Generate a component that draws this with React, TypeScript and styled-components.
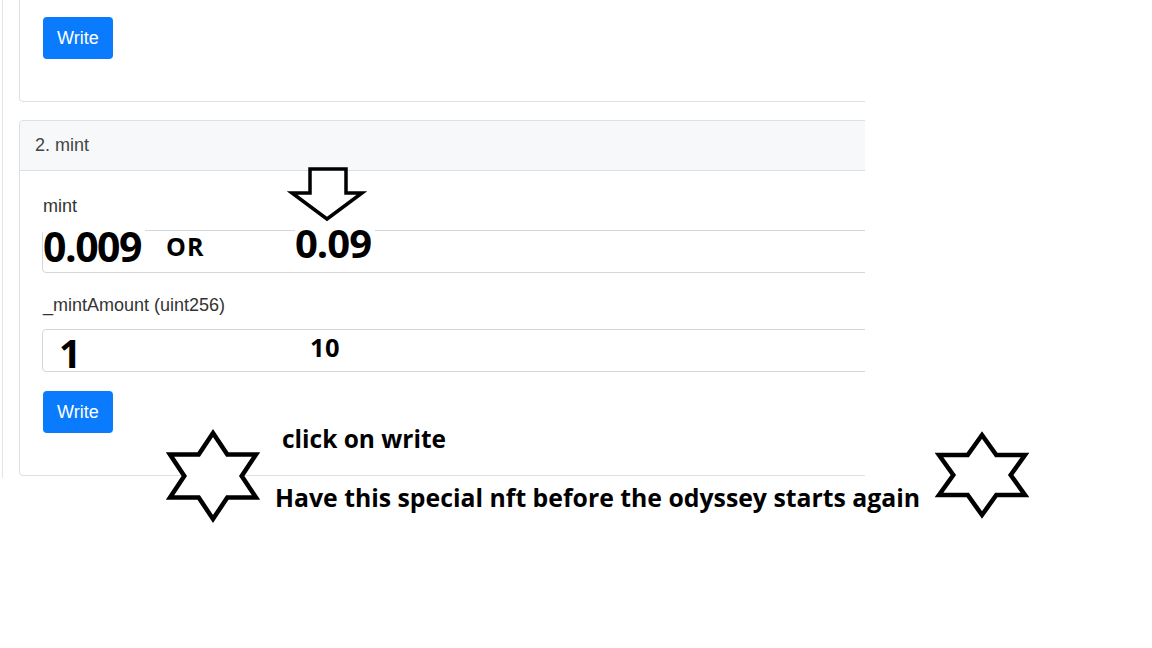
import React from 'react'
import styled, { createGlobalStyle } from 'styled-components'

const GlobalStyle = createGlobalStyle`
  html, body {
    margin: 0;
    padding: 0;
    background: #fff;
  }
  body {
    font-family: 'Liberation Sans', Arial, sans-serif;
  }
  * {
    box-sizing: border-box;
  }
`

type Pt = [number, number]

// six-pointed star, unit points scaled by rx / ry
const starPoints = (rx: number, ry: number, pad: number) => {
  const unit: Pt[] = [
    [0, -1], [1 / 3, -0.5], [1, -0.5], [2 / 3, 0], [1, 0.5], [1 / 3, 0.5],
    [0, 1], [-1 / 3, 0.5], [-1, 0.5], [-2 / 3, 0], [-1, -0.5], [-1 / 3, -0.5],
  ]
  return unit.map(([x, y]) => `${(x * rx + rx + pad).toFixed(1)},${(y * ry + ry + pad).toFixed(1)}`).join(' ')
}

const Star = ({ rx, ry, drop = 0 }: { rx: number; ry: number; drop?: number }) => {
  const pad = 6
  return (
    <StarSvg $drop={drop} width={rx * 2 + pad * 2} height={ry * 2 + pad * 2}>
      <polygon points={starPoints(rx, ry, pad)} fill="#fff" stroke="#000" strokeWidth={4.5} strokeLinejoin="miter" />
    </StarSvg>
  )
}

const DownArrow = () => (
  <ArrowSvg width={84} height={60}>
    <polygon
      points="25,5 61,5 61,29 77,29 42,55 7,29 25,29"
      fill="#fff"
      stroke="#000"
      strokeWidth={3.5}
    />
  </ArrowSvg>
)

const MintField = ({ label }: { label: string }) => (
  <Field>
    <Label>{label}</Label>
    <Input readOnly />
  </Field>
)

export default function App() {
  return (
    <Page>
      <GlobalStyle />
      <Shot>
        <Card $clipped>
          <CardBody $top={36}>
            <WriteButton>Write</WriteButton>
          </CardBody>
        </Card>
        <Card>
          <CardHeader>2. mint</CardHeader>
          <CardBody $top={22}>
            <Form>
              <MintField label="mint" />
              <MintField label="_mintAmount (uint256)" />
              <WriteButton>Write</WriteButton>
            </Form>
          </CardBody>
        </Card>
      </Shot>

      <DownArrow />
      <Note $x={43} $y={226} $size={41} $track={-1.5} $pad={4} $boxed>0.009</Note>
      <Note $x={166} $y={234} $size={25} $track={1}>OR</Note>
      <Note $x={295} $y={223} $size={40} $track={-1} $pad={4} $boxed>0.09</Note>
      <Note $x={59} $y={333} $size={39}>1</Note>
      <Note $x={310} $y={335} $size={25.5} $track={0.5}>10</Note>

      <Banner>
        <Star rx={43} ry={43} />
        <BannerText>
          <BannerLine $size={24.5} $indent={7}>click on write</BannerLine>
          <BannerLine $size={24.8}>Have this special nft before the odyssey starts again</BannerLine>
        </BannerText>
        <Star rx={43} ry={40} drop={2} />
      </Banner>
    </Page>
  )
}

const Page = styled.div`
  position: relative;
  width: 1152px;
  height: 648px;
  overflow: hidden;
  background: #fff;
`

const Shot = styled.div`
  width: 863px;
  height: 478px;
  margin-left: 2px;
  border-left: 1px solid #e4e4e4;
  overflow: hidden;
`

const Card = styled.section<{ $clipped?: boolean }>`
  width: 1000px;
  margin: ${(p) => (p.$clipped ? '-20px 0 0 16px' : '18px 0 0 16px')};
  border: 1px solid #dcdfe3;
  border-radius: 4px;
  background: #fff;
`

const CardHeader = styled.div`
  height: 50px;
  line-height: 49px;
  padding: 0 15px;
  background: #f7f8fa;
  border-bottom: 1px solid #dcdfe3;
  border-radius: 4px 4px 0 0;
  color: #444;
  font-size: 18px;
`

const CardBody = styled.div<{ $top: number }>`
  padding: ${(p) => p.$top}px 0 42px 23px;
`

const Form = styled.div`
  display: flex;
  flex-direction: column;
  align-items: flex-start;
  gap: 19px;
`

const Field = styled.div`
  display: flex;
  flex-direction: column;
  gap: 10px;
`

const Label = styled.label`
  font-size: 18px;
  line-height: 27px;
  color: #333;
`

const Input = styled.input`
  width: 950px;
  height: 43px;
  margin: 0 0 0 -1px;
  border: 1px solid #d3d7db;
  border-radius: 4px;
  background: #fff;
  outline: none;
`

const WriteButton = styled.button`
  height: 42px;
  padding: 0 14px;
  border: none;
  border-radius: 4px;
  background: #0b7bfe;
  color: #fff;
  font-family: 'Liberation Sans', Arial, sans-serif;
  font-size: 18px;
`

const Note = styled.span<{ $x: number; $y: number; $size: number; $track?: number; $pad?: number; $boxed?: boolean }>`
  position: absolute;
  left: ${(p) => p.$x}px;
  top: ${(p) => p.$y}px;
  padding-right: ${(p) => p.$pad ?? 0}px;
  background: ${(p) => (p.$boxed ? '#fff' : 'transparent')};
  color: #000;
  font-family: 'Open Sans', 'Noto Sans', sans-serif;
  font-weight: 700;
  font-size: ${(p) => p.$size}px;
  line-height: 1;
  letter-spacing: ${(p) => p.$track ?? 0}px;
  white-space: nowrap;
`

const ArrowSvg = styled.svg`
  position: absolute;
  left: 285px;
  top: 164px;
  overflow: visible;
`

const Banner = styled.div`
  position: absolute;
  left: 164px;
  top: 427px;
  display: flex;
  align-items: flex-start;
  gap: 13px;
`

const StarSvg = styled.svg<{ $drop: number }>`
  flex: none;
  margin-top: ${(p) => p.$drop}px;
  overflow: visible;
`

const BannerText = styled.div`
  width: 645px;
  display: flex;
  flex-direction: column;
  gap: 33px;
`

const BannerLine = styled.div<{ $size: number; $indent?: number }>`
  padding-left: ${(p) => p.$indent ?? 0}px;
  color: #000;
  font-family: 'Open Sans', 'Noto Sans', sans-serif;
  font-weight: 700;
  font-size: ${(p) => p.$size}px;
  line-height: 1;
  white-space: nowrap;
`
